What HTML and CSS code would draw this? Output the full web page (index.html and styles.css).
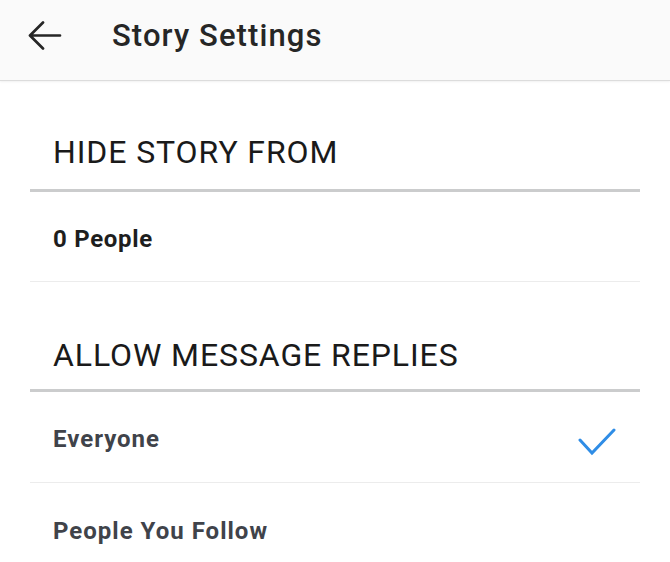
FILE: index.html
```html
<!DOCTYPE html>
<html>
<head>
<meta charset="utf-8">
<link rel="stylesheet" href="styles.css">
</head>
<body>
<header class="topbar">
  <svg class="back" width="34" height="34" viewBox="0 0 34 34">
    <path d="M2.5 14.5 H32 M15 1.5 L2 14.5 L15 27.5" fill="none" stroke="#262626" stroke-width="2.7" stroke-linecap="round" stroke-linejoin="round"/>
  </svg>
  <h1 class="title">Story Settings</h1>
</header>
<main class="content">
  <section class="section">
    <h2 class="section-title">HIDE STORY FROM</h2>
    <div class="row row-strong">0 People</div>
  </section>
  <section class="section">
    <h2 class="section-title second">ALLOW MESSAGE REPLIES</h2>
    <div class="row row-option">
      <span>Everyone</span>
      <svg class="check" width="40" height="30" viewBox="0 0 40 30">
        <path d="M4 12 L16 25 L38 2" fill="none" stroke="#2f8de6" stroke-width="3" stroke-linecap="round" stroke-linejoin="miter"/>
      </svg>
    </div>
    <div class="row row-option">People You Follow</div>
  </section>
</main>
</body>
</html>
```

FILE: styles.css
```css
* { box-sizing: border-box; }
html, body { margin: 0; padding: 0; }
body {
  width: 670px;
  height: 562px;
  overflow: hidden;
  background: #ffffff;
  font-family: Roboto, "Noto Sans", "Liberation Sans", sans-serif;
  color: #262626;
}
.topbar {
  height: 81px;
  background: #fafafa;
  border-bottom: 1px solid #dcdcdc;
  box-shadow: 0 1px 2px rgba(0,0,0,0.06);
  display: flex;
  align-items: center;
  padding-left: 28px;
  padding-bottom: 8px;
}
.back { display: block; margin-top: 4px; flex: none; }
.title {
  margin: 0 0 0 50px;
  font-size: 31px;
  font-weight: 500;
  line-height: 36px;
  color: #262626;
  letter-spacing: 1.1px;
}
.content {
  padding: 0 30px;
}
.section-title {
  margin: 0;
  padding: 51px 0 17px 23px;
  font-size: 32px;
  line-height: 40px;
  font-weight: 400;
  color: #1a1a1a;
  letter-spacing: 0.9px;
  border-bottom: 3px solid #cbcccd;
}
.section-title.second { padding-top: 53px; padding-bottom: 14px; }
.row {
  height: 90px;
  padding: 32px 0 27px 23px;
  font-size: 24px;
  line-height: 30px;
  font-weight: 700;
  letter-spacing: 0.9px;
  border-bottom: 1px solid #ececec;
  display: flex;
  align-items: center;
  justify-content: space-between;
}
.row-strong { color: #1e1e1e; letter-spacing: 0.7px; }
.row-option { height: 91px; color: #40434a; padding-bottom: 28px; letter-spacing: 1px; }
.row-option:last-child { border-bottom: none; }
.check { display: block; margin: 4px 24px -4px 0; }
```
